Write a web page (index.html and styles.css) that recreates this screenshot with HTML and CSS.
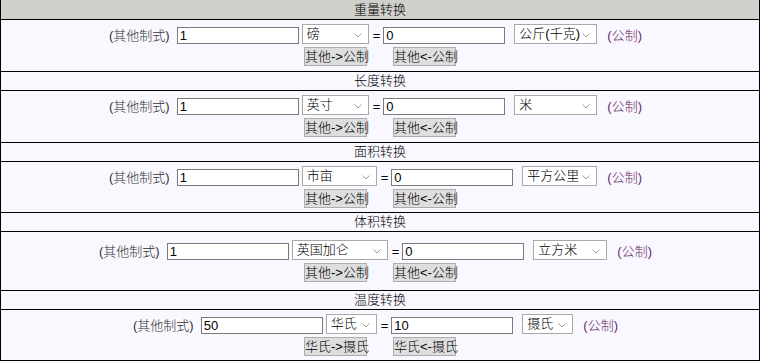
FILE: index.html
```html
<!DOCTYPE html>
<html lang="zh-CN">
<head>
<meta charset="utf-8">
<title>单位转换</title>
<link rel="stylesheet" href="styles.css">
</head>
<body>
<div class="table">
  <div class="head head-first">重量转换</div>
  <div class="body">
    <div class="line">
      <span class="lbl">(其他制式)</span>
      <input class="num in1" type="text" value="1">
      <span class="sel s1" style="width:67px"><span class="sel-t">磅</span><svg class="chev" width="8" height="5" viewBox="0 0 8 5"><path d="M0.5 0.5 L4 4 L7.5 0.5" fill="none" stroke="#9a9a9a" stroke-width="1"/></svg></span>
      <span class="eq">=</span>
      <input class="num in2" type="text" value="0">
      <span class="sel s2" style="width:83px"><span class="sel-t">公斤(千克)</span><svg class="chev" width="8" height="5" viewBox="0 0 8 5"><path d="M0.5 0.5 L4 4 L7.5 0.5" fill="none" stroke="#9a9a9a" stroke-width="1"/></svg></span>
      <span class="metric">(公制)</span>
    </div>
    <div class="btns">
      <button class="btn">其他-&gt;公制</button>
      <button class="btn">其他&lt;-公制</button>
    </div>
  </div>

  <div class="head">长度转换</div>
  <div class="body">
    <div class="line">
      <span class="lbl">(其他制式)</span>
      <input class="num in1" type="text" value="1">
      <span class="sel s1" style="width:67px"><span class="sel-t">英寸</span><svg class="chev" width="8" height="5" viewBox="0 0 8 5"><path d="M0.5 0.5 L4 4 L7.5 0.5" fill="none" stroke="#9a9a9a" stroke-width="1"/></svg></span>
      <span class="eq">=</span>
      <input class="num in2" type="text" value="0">
      <span class="sel s2" style="width:83px"><span class="sel-t">米</span><svg class="chev" width="8" height="5" viewBox="0 0 8 5"><path d="M0.5 0.5 L4 4 L7.5 0.5" fill="none" stroke="#9a9a9a" stroke-width="1"/></svg></span>
      <span class="metric">(公制)</span>
    </div>
    <div class="btns">
      <button class="btn">其他-&gt;公制</button>
      <button class="btn">其他&lt;-公制</button>
    </div>
  </div>

  <div class="head">面积转换</div>
  <div class="body body-short">
    <div class="line">
      <span class="lbl">(其他制式)</span>
      <input class="num in1" type="text" value="1">
      <span class="sel s1" style="width:75px"><span class="sel-t">市亩</span><svg class="chev" width="8" height="5" viewBox="0 0 8 5"><path d="M0.5 0.5 L4 4 L7.5 0.5" fill="none" stroke="#9a9a9a" stroke-width="1"/></svg></span>
      <span class="eq">=</span>
      <input class="num in2" type="text" value="0">
      <span class="sel s2" style="width:75px"><span class="sel-t">平方公里</span><svg class="chev" width="8" height="5" viewBox="0 0 8 5"><path d="M0.5 0.5 L4 4 L7.5 0.5" fill="none" stroke="#9a9a9a" stroke-width="1"/></svg></span>
      <span class="metric">(公制)</span>
    </div>
    <div class="btns">
      <button class="btn">其他-&gt;公制</button>
      <button class="btn">其他&lt;-公制</button>
    </div>
  </div>

  <div class="head">体积转换</div>
  <div class="body body-tall">
    <div class="line">
      <span class="lbl">(其他制式)</span>
      <input class="num in1" type="text" value="1">
      <span class="sel s1" style="width:96px"><span class="sel-t">英国加仑</span><svg class="chev" width="8" height="5" viewBox="0 0 8 5"><path d="M0.5 0.5 L4 4 L7.5 0.5" fill="none" stroke="#9a9a9a" stroke-width="1"/></svg></span>
      <span class="eq">=</span>
      <input class="num in2" type="text" value="0">
      <span class="sel s2" style="width:74px"><span class="sel-t">立方米</span><svg class="chev" width="8" height="5" viewBox="0 0 8 5"><path d="M0.5 0.5 L4 4 L7.5 0.5" fill="none" stroke="#9a9a9a" stroke-width="1"/></svg></span>
      <span class="metric">(公制)</span>
    </div>
    <div class="btns">
      <button class="btn">其他-&gt;公制</button>
      <button class="btn">其他&lt;-公制</button>
    </div>
  </div>

  <div class="head">温度转换</div>
  <div class="body body-short">
    <div class="line">
      <span class="lbl">(其他制式)</span>
      <input class="num in1" type="text" value="50">
      <span class="sel s1" style="width:51px"><span class="sel-t">华氏</span><svg class="chev" width="8" height="5" viewBox="0 0 8 5"><path d="M0.5 0.5 L4 4 L7.5 0.5" fill="none" stroke="#9a9a9a" stroke-width="1"/></svg></span>
      <span class="eq">=</span>
      <input class="num in2" type="text" value="10">
      <span class="sel s2" style="width:51px"><span class="sel-t">摄氏</span><svg class="chev" width="8" height="5" viewBox="0 0 8 5"><path d="M0.5 0.5 L4 4 L7.5 0.5" fill="none" stroke="#9a9a9a" stroke-width="1"/></svg></span>
      <span class="metric">(公制)</span>
    </div>
    <div class="btns">
      <button class="btn">华氏-&gt;摄氏</button>
      <button class="btn">华氏&lt;-摄氏</button>
    </div>
  </div>
</div>
</body>
</html>
```
FILE: styles.css
```css
* { box-sizing: border-box; }
html, body { margin: 0; padding: 0; background: #f8f8fe; }
body {
  font-family: "Liberation Sans", "Noto Sans CJK SC", sans-serif;
  font-size: 13px;
  font-weight: 300;
  color: #000;
}
.table {
  width: 760px;
  border-left: 1px solid #000;
  border-right: 1px solid #000;
  background: #f8f8fe;
}
.head {
  height: 19px;
  line-height: 18px;
  text-align: center;
  border-bottom: 1px solid #000;
  background: #f8f8fe;
}
.head-first {
  height: 20px;
  line-height: 19px;
  background: #cfd0cc;
}
.body {
  padding: 4px 0 5px;
  border-bottom: 1px solid #000;
}
.body-short { padding-bottom: 4px; }
.body-tall { padding: 8px 0 8px; }
.line {
  display: flex;
  justify-content: center;
  align-items: flex-end;
  height: 20px;
}
.lbl {
  color: #333;
  line-height: 17px;
  margin-right: 7px;
}
.num {
  width: 122px;
  height: 17px;
  border: 1px solid #7a7a7a;
  background: #fff;
  padding: 0 2px;
  margin: 0;
  font: 300 13px "Liberation Sans", "Noto Sans CJK SC", sans-serif;
  color: #000;
}
.sel {
  position: relative;
  display: flex;
  align-items: center;
  height: 20px;
  border: 1px solid #a9a9a9;
  background: #fff;
  padding-left: 4px;
  white-space: nowrap;
}
.s1 { margin-left: 3px; margin-right: 4px; }
.s2 { margin-left: 9px; margin-right: 10px; }
.sel-t { line-height: 18px; }
.chev {
  position: absolute;
  right: 6px;
  top: 8px;
}
.eq {
  line-height: 17px;
  margin-right: 3px;
}
.metric {
  color: #6b1f6b;
  line-height: 17px;
  margin-right: 9px;
}
.btns {
  display: flex;
  justify-content: center;
  gap: 26px;
  margin-top: 3px;
}
.btn {
  width: 63px;
  height: 19px;
  margin: 0;
  padding: 0;
  border: 1px solid #adadad;
  background: #dedede;
  font: 300 13px "Liberation Sans", "Noto Sans CJK SC", sans-serif;
  color: #000;
  line-height: 17px;
  white-space: nowrap;
}
```
